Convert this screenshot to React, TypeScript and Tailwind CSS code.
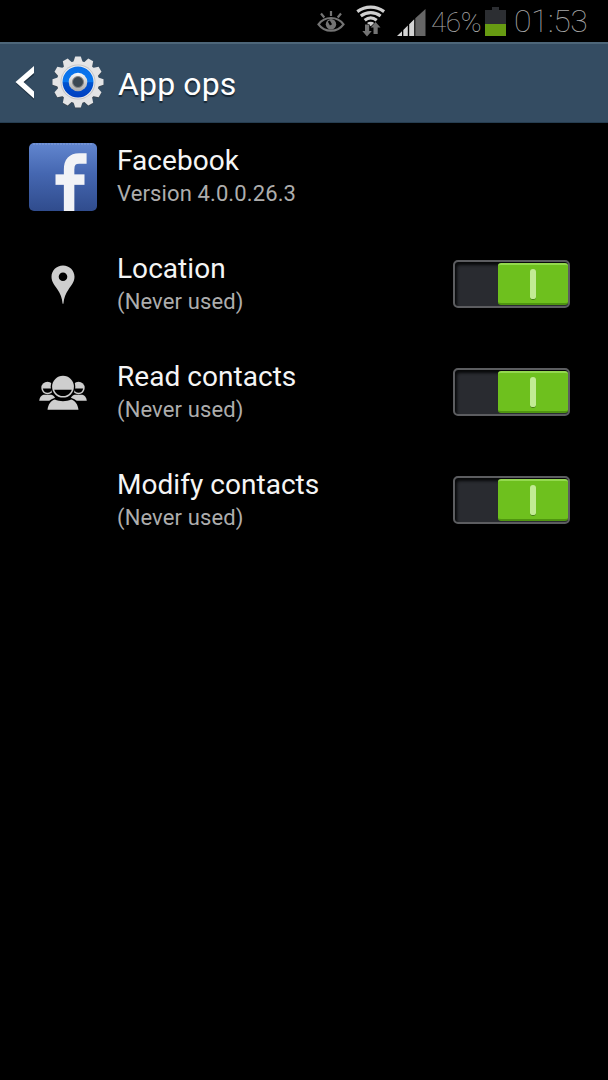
import React from "react";

interface OpRowProps {
  icon?: React.ReactNode;
  title: string;
  summary: string;
  action?: React.ReactNode;
}

const EyeIcon = () => (
  <svg width="28" height="24" viewBox="0 0 28 24" fill="none" stroke="#747474">
    <path d="M1.500 14.300C5 9.600 9.300 8 14 8s9 1.600 12.500 6.300C23 19 18.700 20.700 14 20.700S5 19 1.500 14.300Z" strokeWidth="2.200" />
    <circle cx="14" cy="14.300" r="5.200" fill="#747474" stroke="none" />
    <path d="M14 14.800 11.800 11" stroke="#000" strokeWidth="2.400" />
    <path d="M14 1v5M4 3.500l3.300 4M24 3.500l-3.300 4" strokeWidth="2.200" />
  </svg>
);

const WifiIcon = () => (
  <svg width="30" height="32" viewBox="0 0 30 32" fill="none">
    <g stroke="#d0d0d0" strokeWidth="3.200">
      <path d="M1.300 6.600C9.500.600 19.900.600 28.100 6.600" />
      <path d="M4.800 11c6-4.500 13.800-4.500 19.800 0" />
      <path d="M8.700 15.200c3.700-2.900 8.300-2.900 12 0" />
    </g>
    <path d="M11 17.900c2.400-1.500 5-1.500 7.400 0l-3.700 3.400z" fill="#d0d0d0" />
    <path
      d="M9 19.500h4.200V26h2.600L11 31.500 6.300 26H9zM17.500 29h4.200v-6.500h2.800L19.600 17l-4.900 5.500h2.800z"
      fill="#747474"
      stroke="#000"
      strokeWidth=".8"
      paintOrder="stroke"
    />
  </svg>
);

const SignalIcon = () => (
  <svg width="29" height="28" viewBox="0 0 29 28">
    <path d="M0 27 5 22.200V27zM6.300 27v-6.100l4.500-4.400V27zM12.200 27V15.200l5-4.900V27z" fill="#d4d4d4" />
    <path d="M18.300 27V9.300L28.500 0v27z" fill="#666" />
  </svg>
);

const BatteryIcon = () => (
  <svg width="21" height="29" viewBox="0 0 21 29">
    <path d="M0 3h7V0h7v3h7v15H0z" fill="#2c2e32" />
    <path d="M0 17h21v12H0z" fill="#679b12" />
  </svg>
);

const teeth = [0, 30, 60, 90, 120, 150, 180, 210, 240, 270, 300, 330];

const GearIcon = () => (
  <svg width="52" height="54" viewBox="-26 -26 52 54">
    <defs>
      <linearGradient id="gearRing" x1="0" y1="0" x2="0" y2="1">
        <stop offset="0" stopColor="#0a6fe8" />
        <stop offset=".5" stopColor="#0878f0" />
        <stop offset=".52" stopColor="#0053cf" />
        <stop offset="1" stopColor="#003fc0" />
      </linearGradient>
      <linearGradient id="gearHub" x1="0" y1="0" x2="0" y2="1">
        <stop offset="0" stopColor="#fafafa" />
        <stop offset="1" stopColor="#a9a9a9" />
      </linearGradient>
    </defs>
    <g fill="#3a4652" transform="translate(0 1)">
      <circle r="21.200" />
      {teeth.map((a) => (
        <path key={a} d="M-4.800-19.500-2.800-25.500h5.600L4.800-19.500z" transform={`rotate(${a})`} />
      ))}
    </g>
    <g fill="#e4e4e5">
      <circle r="21" />
      {teeth.map((a) => (
        <path key={a} d="M-4.800-19.500-2.800-25.500h5.600L4.800-19.500z" transform={`rotate(${a})`} />
      ))}
    </g>
    <circle r="17.500" fill="#c4c4c6" />
    <circle r="16.500" fill="#f0f0f0" />
    <circle r="15.500" fill="url(#gearRing)" />
    <circle r="9.300" fill="url(#gearHub)" />
    <circle r="5.500" fill="#3b4853" stroke="#888" />
  </svg>
);

const FacebookIcon = () => (
  <svg width="68" height="68" viewBox="0 0 68 68">
    <defs>
      <linearGradient id="fbBg" x1="0" y1="0" x2="0" y2="1">
        <stop offset="0" stopColor="#6286cf" />
        <stop offset=".45" stopColor="#4567b1" />
        <stop offset="1" stopColor="#304c8d" />
      </linearGradient>
    </defs>
    <rect width="68" height="68" rx="5" fill="url(#fbBg)" />
    <path d="M4 1h60" stroke="#83a0dc" strokeDasharray="2 1" />
    <g fill="none" stroke="#f2f3f6" strokeWidth="10.500">
      <path d="M40.100 68V26.500c0-7.500 3.500-11 10-11h7.500" />
      <path d="M26.500 36.600h29" />
    </g>
  </svg>
);

const PinIcon = () => (
  <svg width="24" height="40" viewBox="0 0 24 40" className="mr-px">
    <path
      d="M12 .5C5.400.5.500 5.500.500 11.800c0 5.200 2.800 8.100 6 12.700 3 4.300 4.500 8.300 5.100 14.200h.8c.6-5.900 2.100-9.900 5.100-14.200 3.200-4.600 6-7.500 6-12.700C23.500 5.500 18.600.5 12 .5Zm0 7a4.300 4.300 0 1 1 0 8.600 4.300 4.300 0 0 1 0-8.600Z"
      fill="#cecece"
      fillRule="evenodd"
    />
  </svg>
);

const ContactsIcon = () => (
  <svg width="48" height="36" viewBox="0 0 48 36" fill="#cecece" className="mr-px">
    {[8.5, 39.5].map((x) => (
      <g key={x} transform={`translate(${x} 0)`}>
        <circle cy="13" r="6.200" />
        <path d="M-4.700 13.400h9.400c-.5 2.800-2.300 4.300-4.700 4.300s-4.200-1.500-4.700-4.300Z" fill="#000" />
        <path d="M-8.300 25.800c.3-3.100 2-5.300 4.300-6h8c2.300.7 4 2.900 4.300 6z" />
      </g>
    ))}
    <circle cx="24" cy="11.800" r="12.300" fill="#000" />
    <path d="M6.500 36c.5-8 4-11.500 9-13h17c5 1.500 8.500 5 9 13z" fill="#000" />
    <circle cx="24" cy="11.700" r="10.900" />
    <path d="M15.200 14.800h17.600c-1.500 4-4.700 6.300-8.800 6.300s-7.300-2.300-8.800-6.300Z" fill="#000" />
    <path d="M8.500 34.700c.7-5.600 3.500-9 7.300-10.200 5 2.200 11.400 2.200 16.400 0 3.800 1.200 6.600 4.600 7.300 10.200z" />
  </svg>
);

const Toggle = () => (
  <div className="mb-0.5 flex h-12 w-[117px] justify-end rounded-[5px] border-2 border-[#5c5d60] bg-[#292b30] pt-px shadow-[inset_2px_3px_3px_#08090a]">
    <div className="flex h-[42px] w-[70px] items-center justify-center rounded-[3px] border-t-2 border-b-2 border-t-[#94d94f] border-b-[#4f9510] bg-[#6ec01e]">
      <div className="h-[31px] w-1.5 rounded-[3px] border-b border-[#427b12] bg-[#c2eb94]" />
    </div>
  </div>
);

const OpRow: React.FC<OpRowProps> = ({ icon, title, summary, action }) => (
  <div className="flex h-27 items-center pr-[38px]">
    <div className="flex w-[117px] shrink-0 items-center pl-[29px]">
      <div className="flex w-[68px] justify-center">{icon}</div>
    </div>
    <div className="min-w-0 flex-1">
      <div className="text-[28px] leading-[33px] tracking-[0.04px] text-[#f5f5f5]">{title}</div>
      <div className="text-[22px] leading-[33px] tracking-[0.12px] text-[#adadad]">{summary}</div>
    </div>
    {action}
  </div>
);

export default function App() {
  return (
    <div className="flex h-[1080px] w-[608px] flex-col overflow-hidden bg-black font-['Roboto',sans-serif]">
      <div className="flex h-[42px] items-start pl-[317px] text-[#a8a8a8]">
        <div className="mt-[10px] shrink-0">
          <EyeIcon />
        </div>
        <div className="mt-[5px] ml-[11px] shrink-0">
          <WifiIcon />
        </div>
        <div className="mt-[9px] ml-[11px] shrink-0">
          <SignalIcon />
        </div>
        <span className="ml-[5px] w-[54px] shrink-0 text-[28px] leading-[45px] font-thin tracking-[-0.5px]">46%</span>
        <div className="mt-[7px] shrink-0">
          <BatteryIcon />
        </div>
        <span className="ml-2 text-[32px] leading-[43px] font-thin tracking-[-0.5px]">01:53</span>
      </div>

      <div className="flex h-[81px] items-center border-t-2 border-b border-t-[#4d6679] border-b-[#263d50] bg-[#344c62]">
        <svg className="ml-[15px] shrink-0" width="20" height="34" viewBox="0 0 20 34">
          <path d="M19 2v7L8.500 17.500 19 27v7L1 17.500z" fill="#1f3141" />
          <path d="M19 0v7L8.500 16 19 25.500v7L.500 16z" fill="#fff" />
        </svg>
        <div className="ml-[17px] shrink-0">
          <GearIcon />
        </div>
        <h1 className="mt-0.5 ml-[14px] text-[32px] leading-10 tracking-[0.15px] text-white [text-shadow:0_2px_1px_#172633]">App ops</h1>
      </div>

      <OpRow icon={<FacebookIcon />} title="Facebook" summary="Version 4.0.0.26.3" />
      <OpRow icon={<PinIcon />} title="Location" summary="(Never used)" action={<Toggle />} />
      <OpRow icon={<ContactsIcon />} title="Read contacts" summary="(Never used)" action={<Toggle />} />
      <OpRow title="Modify contacts" summary="(Never used)" action={<Toggle />} />
    </div>
  );
}
